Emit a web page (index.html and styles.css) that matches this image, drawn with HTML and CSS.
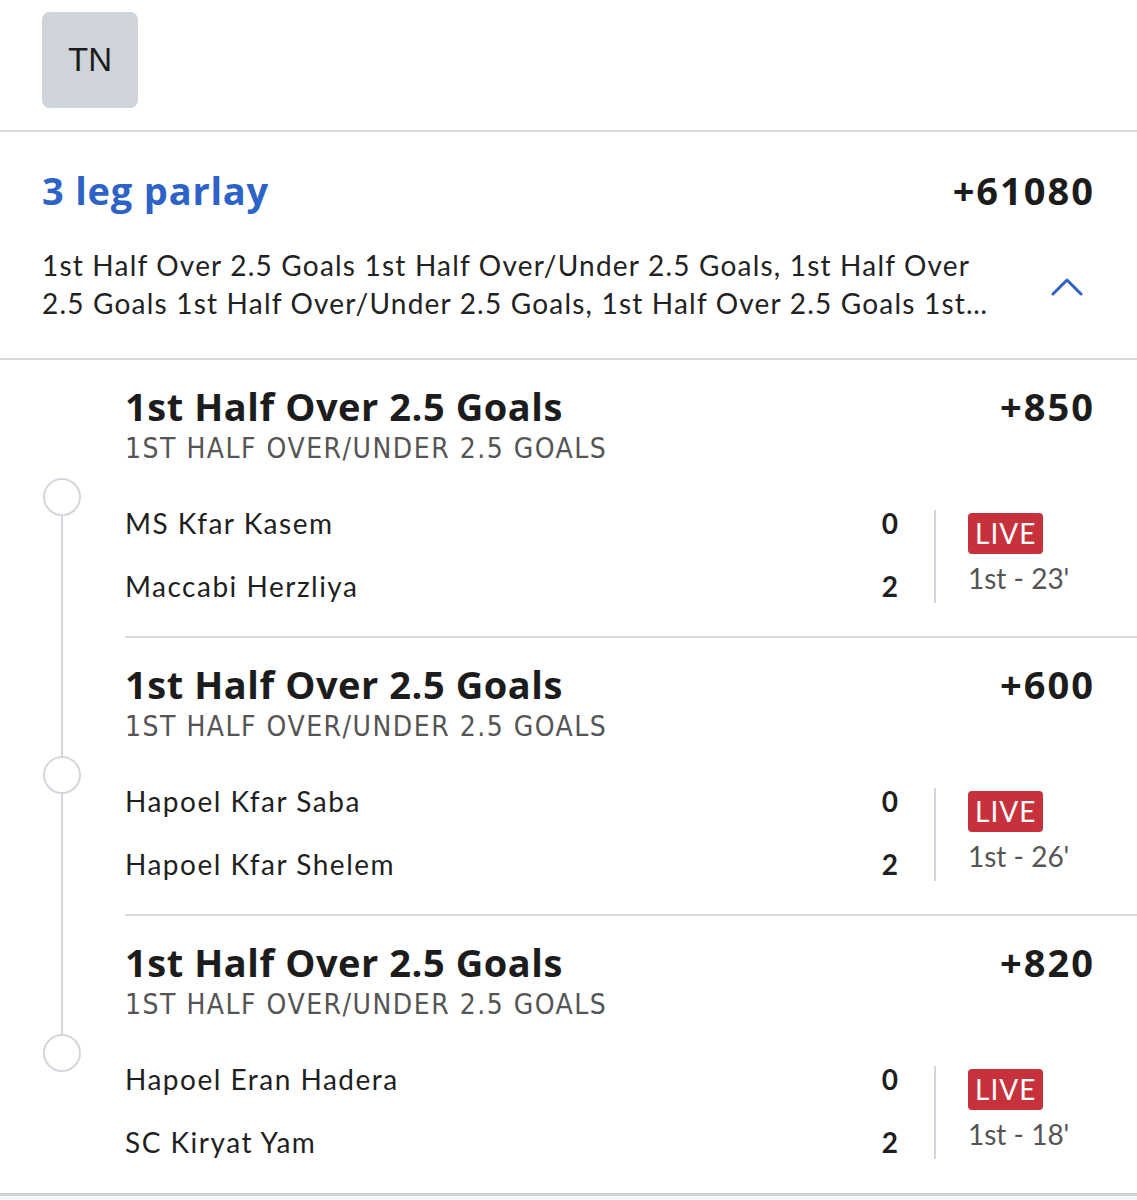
FILE: index.html
```html
<!DOCTYPE html>
<html lang="en">
<head>
  <meta charset="UTF-8">
  <meta name="viewport" content="width=device-width, initial-scale=1.0">
  <title>3 leg parlay</title>
  <link rel="stylesheet" href="styles.css">
</head>
<body>

  <!-- Account -->
  <header class="account">
    <div class="avatar">TN</div>
  </header>

  <!-- Parlay summary -->
  <section class="parlay">
    <div class="parlay-head">
      <h1 class="parlay-title">3 leg parlay</h1>
      <span class="odds">+61080</span>
    </div>
    <div class="parlay-desc">
      <p>1st Half Over 2.5 Goals 1st Half Over/Under 2.5 Goals, 1st Half Over 2.5 Goals 1st Half Over/Under 2.5 Goals, 1st Half Over 2.5 Goals 1st…</p>
      <svg class="chevron" width="32" height="20" viewBox="0 0 32 20">
        <path d="M2 17 L16 3 L30 17" fill="none" stroke="#2d62c6" stroke-width="3" stroke-linecap="round" stroke-linejoin="round"/>
      </svg>
    </div>
  </section>

  <!-- Legs -->
  <section class="legs">

    <div class="leg">
      <span class="dot"></span>
      <div class="leg-head">
        <h2 class="leg-title">1st Half Over 2.5 Goals</h2>
        <span class="odds">+850</span>
      </div>
      <p class="market">1st Half Over/Under 2.5 Goals</p>
      <div class="match">
        <div class="teams">
          <div>MS Kfar Kasem</div>
          <div>Maccabi Herzliya</div>
        </div>
        <div class="scores">
          <div>0</div>
          <div>2</div>
        </div>
        <div class="status">
          <span class="live">LIVE</span>
          <span class="clock">1st - 23'</span>
        </div>
      </div>
    </div>

    <div class="leg">
      <span class="dot"></span>
      <div class="leg-head">
        <h2 class="leg-title">1st Half Over 2.5 Goals</h2>
        <span class="odds">+600</span>
      </div>
      <p class="market">1st Half Over/Under 2.5 Goals</p>
      <div class="match">
        <div class="teams">
          <div>Hapoel Kfar Saba</div>
          <div>Hapoel Kfar Shelem</div>
        </div>
        <div class="scores">
          <div>0</div>
          <div>2</div>
        </div>
        <div class="status">
          <span class="live">LIVE</span>
          <span class="clock">1st - 26'</span>
        </div>
      </div>
    </div>

    <div class="leg">
      <span class="dot"></span>
      <div class="leg-head">
        <h2 class="leg-title">1st Half Over 2.5 Goals</h2>
        <span class="odds">+820</span>
      </div>
      <p class="market">1st Half Over/Under 2.5 Goals</p>
      <div class="match">
        <div class="teams">
          <div>Hapoel Eran Hadera</div>
          <div>SC Kiryat Yam</div>
        </div>
        <div class="scores">
          <div>0</div>
          <div>2</div>
        </div>
        <div class="status">
          <span class="live">LIVE</span>
          <span class="clock">1st - 18'</span>
        </div>
      </div>
    </div>

  </section>

  <footer class="bottom-bar"></footer>

</body>
</html>
```

FILE: styles.css
```css
/* Global */
* {
  margin: 0;
  padding: 0;
  box-sizing: border-box;
}

body {
  font-family: 'Lato', 'Liberation Sans', sans-serif;
  color: #1f1f1f;
  background: #fff;
  width: 1137px;
  overflow: hidden;
}

/* Account header */
.account {
  padding: 12px 42px 22px;
  border-bottom: 2px solid #d5d8dd;
}

.avatar {
  width: 96px;
  height: 96px;
  border-radius: 8px;
  background-color: #cfd3da;
  display: flex;
  align-items: center;
  justify-content: center;
  font-family: 'Liberation Sans', sans-serif;
  font-size: 33px;
  color: #1c1c1c;
}

/* Parlay summary */
.parlay {
  padding: 34px 44px 36px 42px;
  border-bottom: 2px solid #d5d8dd;
}

.parlay-head {
  display: flex;
  justify-content: space-between;
  align-items: center;
  height: 48px;
}

.parlay-title {
  font-family: 'Open Sans', sans-serif;
  font-size: 38px;
  font-weight: 700;
  letter-spacing: 0.8px;
  color: #2d62c6;
}

.odds {
  font-family: 'Open Sans', sans-serif;
  font-size: 38px;
  font-weight: 700;
  letter-spacing: 2px;
  margin-right: -2px;
  color: #1c1c1c;
}

.parlay-desc {
  display: flex;
  align-items: center;
  gap: 40px;
  margin-top: 32px;
}

.parlay-desc p {
  flex: 1;
  font-size: 28px;
  letter-spacing: 1.2px;
  line-height: 38px;
  color: #222;
}

.chevron {
  margin: 6px 10px 0 0;
}

/* Legs */
.leg {
  position: relative;
  margin-left: 125px;
  padding: 23px 44px 0 0;
  border-bottom: 2px solid #d5d8dd;
  height: 278px;
}

.leg:last-child {
  border-bottom: none;
  height: 277px;
}

/* timeline line + dot */
.leg::before,
.leg::after {
  content: '';
  position: absolute;
  left: -64px;
  width: 2px;
  background-color: #d3d7dd;
}

.leg::before {
  top: -2px;
  height: 139px;
}

.leg::after {
  top: 137px;
  bottom: -2px;
}

.leg:first-child::before,
.leg:last-child::after {
  display: none;
}

.dot {
  position: absolute;
  left: -82px;
  top: 118px;
  width: 38px;
  height: 38px;
  border: 2px solid #d3d7dd;
  border-radius: 50%;
  background: #fff;
  z-index: 1;
}

.leg-head {
  display: flex;
  justify-content: space-between;
  align-items: center;
  height: 46px;
}

.leg-title {
  font-family: 'Open Sans', sans-serif;
  font-size: 38px;
  font-weight: 700;
  letter-spacing: 0.55px;
  color: #1c1c1c;
}

.market {
  font-family: 'DejaVu Sans Condensed', 'DejaVu Sans', sans-serif;
  font-stretch: condensed;
  text-transform: uppercase;
  font-size: 28px;
  letter-spacing: 1.5px;
  line-height: 36px;
  margin-top: 2px;
  color: #555;
}

.match {
  display: flex;
  margin-top: 25px;
}

.teams {
  flex: 1;
  font-size: 28px;
  letter-spacing: 1.5px;
}

.teams div,
.scores div {
  height: 63px;
  line-height: 63px;
}

.scores {
  font-size: 28px;
  font-weight: 700;
  text-align: right;
  padding-right: 36px;
  border-right: 2px solid #d3d7dd;
  margin: 18px 0 15px;
}

.scores div:first-child {
  margin-top: -18px;
}

.scores div:last-child {
  margin-bottom: -15px;
}

.status {
  width: 157px;
  padding: 21px 0 0 32px;
  display: flex;
  flex-direction: column;
  align-items: flex-start;
}

.live {
  background-color: #c7313b;
  color: #fff;
  border-radius: 4px;
  font-size: 28px;
  letter-spacing: 1px;
  height: 41px;
  line-height: 41px;
  padding: 0 7px;
}

.clock {
  font-size: 28px;
  line-height: 48px;
  color: #555;
}

/* Bottom */
.bottom-bar {
  height: 20px;
  border-top: 3px solid #cfd3d8;
  background-color: #f4f6f9;
}
```
